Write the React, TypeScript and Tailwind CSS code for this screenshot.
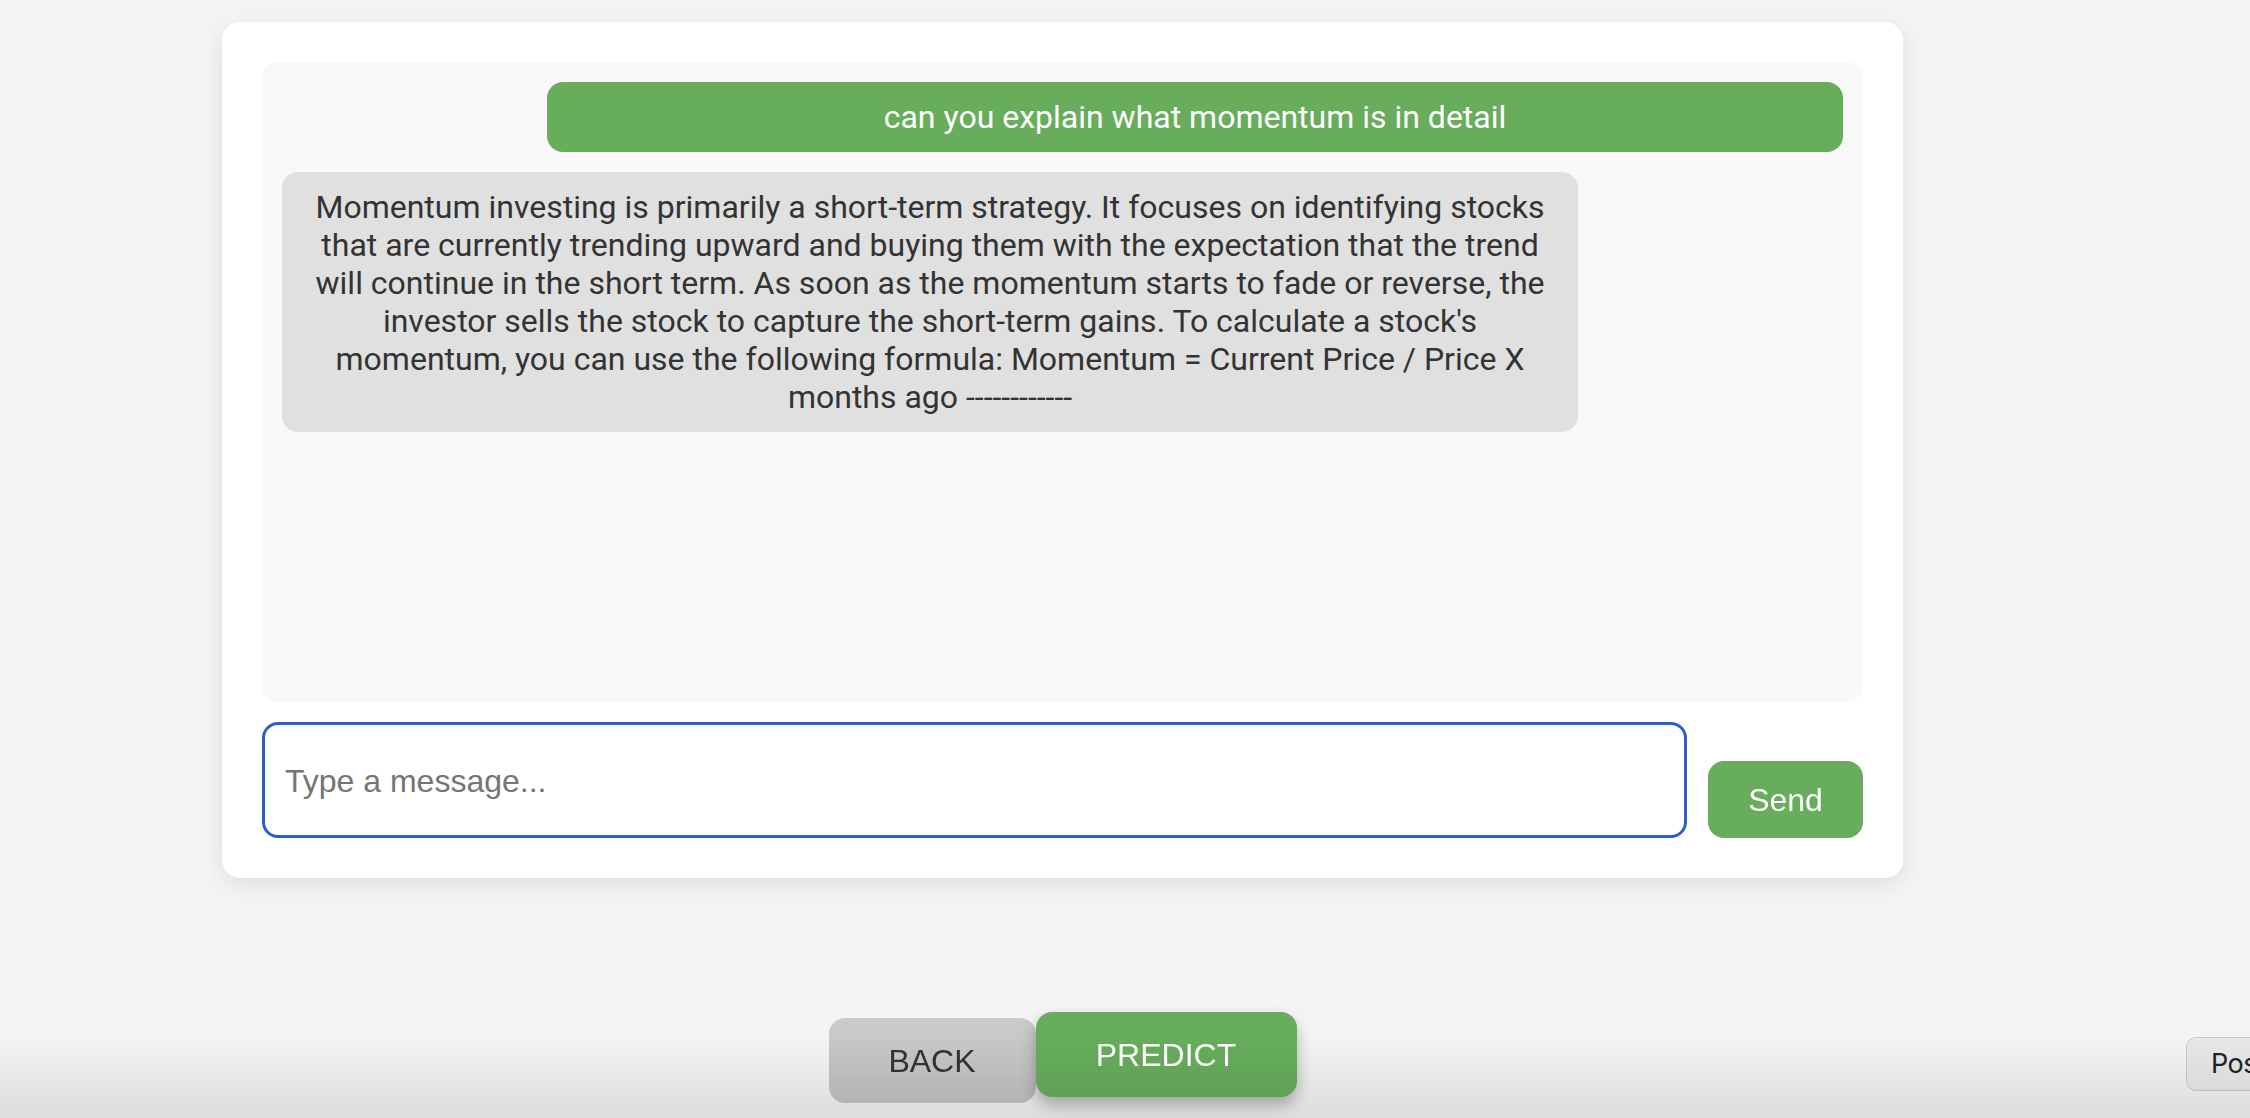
import { useState } from 'react';

const answer =
  "Momentum investing is primarily a short-term strategy. It focuses on identifying stocks that are currently trending upward and buying them with the expectation that the trend will continue in the short term. As soon as the momentum starts to fade or reverse, the investor sells the stock to capture the short-term gains. To calculate a stock's momentum, you can use the following formula: Momentum = Current Price / Price X months ago ------------";

export default function App() {
  const [draft, setDraft] = useState('');

  const messages = [
    { id: 1, from: 'user', text: 'can you explain what momentum is in detail' },
    { id: 2, from: 'bot', text: answer },
  ];

  return (
    <div className="relative min-h-[1118px] w-full overflow-hidden bg-[#f4f4f4]">
      <div className="flex flex-col pl-[222px] pt-[22px]">
        {/* Chat card */}
        <div className="w-[1681px] rounded-[18px] bg-white p-[40px] shadow-[0_6px_24px_rgba(0,0,0,0.09)]">
          <div className="flex h-[640px] flex-col gap-[20px] overflow-y-auto rounded-[16px] bg-[#f8f8f8] p-[20px] font-['Roboto',sans-serif] text-[32px]">
            {messages.map((m) => (
              <div
                key={m.id}
                className={`w-[1296px] rounded-[16px] px-[26px] py-[16px] text-center leading-[38px] ${
                  m.from === 'user'
                    ? 'self-end bg-[#67ad5c] text-white'
                    : 'self-start bg-[#e0e0e0] text-[#333333]'
                }`}
              >
                {m.text}
              </div>
            ))}
          </div>

          {/* Composer */}
          <div className="mt-[20px] flex items-end gap-[21px]">
            <input
              autoFocus
              value={draft}
              onChange={(e) => setDraft(e.target.value)}
              placeholder="Type a message..."
              className="h-[116px] flex-1 rounded-[16px] border-[3px] border-[#2b5fc8] bg-white px-[20px] pt-[2px] font-['Liberation_Sans',Arial,sans-serif] text-[32px] text-[#222] caret-black outline-none placeholder:text-[#757575]"
            />
            <button className="h-[77px] w-[155px] rounded-[16px] bg-[#67ad5c] font-['Liberation_Sans',Arial,sans-serif] text-[32px] text-white">
              Send
            </button>
          </div>
        </div>

        {/* Bottom actions */}
        <div className="mt-[140px] flex w-[1681px] items-start justify-center">
          <button className="h-[85px] w-[207px] rounded-[16px] bg-gradient-to-b from-[#cacaca] to-[#c2c2c2] font-['Liberation_Sans',Arial,sans-serif] text-[32px] text-[#333]">
            BACK
          </button>
          <button className="-mt-[6px] h-[85px] w-[261px] rounded-[16px] bg-[#67ad5c] font-['Liberation_Sans',Arial,sans-serif] text-[32px] text-white shadow-[0_8px_16px_rgba(0,0,0,0.28)]">
            PREDICT
          </button>
        </div>
      </div>

      {/* Floating pill cut off at the right edge */}
      <div className="absolute left-[2186px] top-[1037px] flex h-[54px] w-[160px] items-center rounded-[10px] border border-[#c9c9c9] bg-[#e8e8e8] pl-[24px] font-['Inter',sans-serif] text-[27px] tracking-[-0.5px] text-[#222]">
        Pos
      </div>

      {/* Bottom fade */}
      <div className="pointer-events-none absolute bottom-0 left-0 h-[80px] w-full bg-gradient-to-b from-transparent to-[rgba(0,0,0,0.09)]" />
    </div>
  );
}
